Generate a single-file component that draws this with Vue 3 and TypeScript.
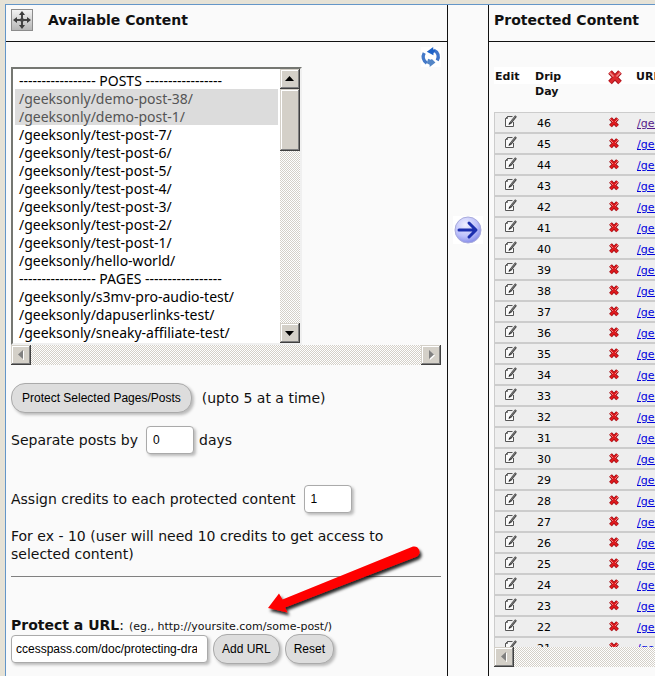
<script setup lang="ts">
import { ref } from 'vue'

interface Entry {
  label: string
  selected?: boolean
}

const dashes = '-----------------'
const entries: Entry[] = [
  { label: `${dashes} POSTS ${dashes}` },
  { label: '/geeksonly/demo-post-38/', selected: true },
  { label: '/geeksonly/demo-post-1/', selected: true },
  { label: '/geeksonly/test-post-7/' },
  { label: '/geeksonly/test-post-6/' },
  { label: '/geeksonly/test-post-5/' },
  { label: '/geeksonly/test-post-4/' },
  { label: '/geeksonly/test-post-3/' },
  { label: '/geeksonly/test-post-2/' },
  { label: '/geeksonly/test-post-1/' },
  { label: '/geeksonly/hello-world/' },
  { label: `${dashes} PAGES ${dashes}` },
  { label: '/geeksonly/s3mv-pro-audio-test/' },
  { label: '/geeksonly/dapuserlinks-test/' },
  { label: '/geeksonly/sneaky-affiliate-test/' },
]

const chosen = ref<string[]>(entries.filter((e) => e.selected).map((e) => e.label))
const days = ref('0')
const credits = ref('1')
const url = ref('ccesspass.com/doc/protecting-drafts/')

const dripDays: number[] = Array.from({ length: 26 }, (_, i) => 46 - i)
</script>

<template>
  <main class="page">
    <section class="col available">
      <header class="bar">
        <svg class="move" viewBox="0 0 22 22" aria-hidden="true">
          <defs>
            <linearGradient id="plate" x1="0" y1="0" x2="0" y2="1">
              <stop offset="0" stop-color="#f4f4f4" />
              <stop offset="1" stop-color="#b4b4b4" />
            </linearGradient>
          </defs>
          <rect x="0.5" y="0.5" width="21" height="21" fill="url(#plate)" stroke="#8c8c8c" />
          <path d="M11 4v14M4 11h14" stroke="#444" stroke-width="2" />
          <path d="M11 2l3 4H8zM11 20l3-4H8zM2 11l4-3v6zM20 11l-4-3v6z" fill="#3c3c3c" />
          <circle cx="11" cy="11" r="2" fill="#444" />
        </svg>
        <h2>Available Content</h2>
      </header>
      <div class="body">
        <div class="tools">
          <button class="refresh" type="button" aria-label="Refresh">
            <svg viewBox="1 1 18 18">
              <path d="M6.2 15.6C2.8 13.2 2.2 9.6 3.9 6.4" fill="none" stroke="#4479c8" stroke-width="3" />
              <path d="M12.6 4C16.4 5.6 17.6 9.6 15.6 13.2" fill="none" stroke="#3f74c9" stroke-width="3" />
              <path d="M6.2 5.2L12 1V3l2 1.2-1.8 2.4V8.500z" fill="#1d62c8" />
              <path d="M14 15L8.800 19v-2l-2.600-1.400L7.400 11.500l2.400 1 1-.6z" fill="#5385c6" />
            </svg>
          </button>
        </div>

        <div class="listbox">
          <select v-model="chosen" multiple size="15" aria-label="Available Content">
            <option v-for="e in entries" :key="e.label" :value="e.label">{{ e.label }}</option>
          </select>
          <div class="track vertical">
            <button class="knob" type="button" aria-label="Scroll up">
              <svg viewBox="0 0 20 20"><path d="M5 12h9L9.500 7z" fill="#000" /></svg>
            </button>
            <div class="knob thumb"></div>
            <button class="knob end" type="button" aria-label="Scroll down">
              <svg viewBox="0 0 20 20"><path d="M5 8h9l-4.500 5z" fill="#000" /></svg>
            </button>
          </div>
        </div>
        <div class="track">
          <button class="knob" type="button" aria-label="Scroll left">
            <svg viewBox="0 0 20 20"><path d="M12.500 6v9" stroke="#fff" /><path d="M12 5v9L7 9.500z" fill="#808080" /></svg>
          </button>
          <button class="knob end" type="button" aria-label="Scroll right">
            <svg viewBox="0 0 20 20"><path d="M9 6v9l5-4.500z" fill="#fff" /><path d="M8 5v9l5-4.500z" fill="#808080" /></svg>
          </button>
        </div>

        <form class="fields" @submit.prevent>
          <div class="line protect">
            <button class="pill" type="button">Protect Selected Pages/Posts</button>
            <span>(upto 5 at a time)</span>
          </div>
          <div class="line separate">
            <label for="days">Separate posts by</label>
            <input id="days" v-model="days" class="box small" type="text" />
            <span>days</span>
          </div>
          <div class="line assign">
            <label for="credits">Assign credits to each protected content</label>
            <input id="credits" v-model="credits" class="box small" type="text" />
          </div>
          <p>For ex - 10 (user will need 10 credits to get access to selected content)</p>
          <div class="divider">
            <hr />
            <svg class="pointer" viewBox="0 0 170 80" aria-hidden="true">
              <defs>
                <filter id="cast" x="-10%" y="-10%" width="130%" height="140%">
                  <feDropShadow dx="2" dy="3" stdDeviation="1.500" flood-color="#000" flood-opacity="0.85" />
                </filter>
              </defs>
              <path
                d="M6 68L17 53.500 20.500 59.500 151 6.500A5.500 5.500 0 0 1 155 16.500L23 67.500 25.500 72.500Z"
                fill="#f00"
                filter="url(#cast)"
              />
            </svg>
          </div>
          <div class="caption">
            <label for="url"><strong>Protect a URL</strong>:</label>
            <small>(eg., http://yoursite.com/some-post/)</small>
          </div>
          <div class="line submit">
            <input id="url" v-model="url" class="box wide" type="text" />
            <button class="pill" type="button">Add URL</button>
            <button class="pill" type="reset">Reset</button>
          </div>
        </form>
      </div>
    </section>

    <section class="col transfer">
      <button type="button" aria-label="Move to protected">
        <svg viewBox="0 0 30 28">
          <defs>
            <radialGradient id="orb" cx="0.4" cy="0.3" r="0.75">
              <stop offset="0" stop-color="#f0f0ff" />
              <stop offset="0.6" stop-color="#bcc0fa" />
              <stop offset="1" stop-color="#7d84e6" />
            </radialGradient>
          </defs>
          <circle cx="15" cy="14" r="13" fill="url(#orb)" stroke="#a9abdc" />
          <path d="M6 14h16M16 7l7 7-7 7" fill="none" stroke="#1c2fae" stroke-width="3" stroke-linecap="round" stroke-linejoin="round" />
        </svg>
      </button>
    </section>

    <section class="col protected">
      <header class="bar">
        <h2>Protected Content</h2>
      </header>
      <div class="pane">
        <table>
          <colgroup>
            <col class="c-edit" />
            <col class="c-day" />
            <col class="c-del" />
            <col />
          </colgroup>
          <thead>
            <tr>
              <th>Edit</th>
              <th>Drip<br />Day</th>
              <th>
                <svg class="cross big" viewBox="0 0 16 16" role="img" aria-label="Delete">
                  <path d="M3 3l10 10.500M13 3L3 13.500" stroke="#a8121c" stroke-width="5" />
                  <path d="M3 3l10 10.500M13 3L3 13.500" stroke="#dc2a2e" stroke-width="3.200" />
                  <path d="M2.500 3.500l4 4M13.500 3.500l-4 4" stroke="#ee8484" stroke-width="1.500" />
                </svg>
              </th>
              <th>URL</th>
            </tr>
          </thead>
          <tbody>
            <tr v-for="(day, i) in dripDays" :key="day">
              <td class="action">
                <button class="icon" type="button" aria-label="Edit">
                  <svg class="pad" viewBox="0 0 13 13">
                    <path d="M3.500 1.500H8.500M9.500 7v4.500h-8V3.500l2-2" fill="#fafafa" stroke="#555" />
                    <path d="M3.500 1.500v2h-2z" fill="#999" stroke="#555" stroke-width="0.800" />
                    <path d="M12 1L6.500 8" stroke="#444" stroke-width="2.200" />
                    <path d="M11.500 1.300L7 7" stroke="#aaa" stroke-width="0.600" />
                    <path d="M4.600 10l.6-2.800 2.100 1.500z" fill="#222" />
                  </svg>
                </button>
              </td>
              <td class="day">{{ day }}</td>
              <td class="action">
                <button class="icon" type="button" aria-label="Delete">
                  <svg class="cross" viewBox="0 0 12 12">
                    <path d="M2.500 2.500l7 7.500M9.500 2.500l-7 7.500" stroke="#980c14" stroke-width="3.800" />
                    <path d="M2.500 2.500l7 7.500M9.500 2.500l-7 7.500" stroke="#e01a1e" stroke-width="2.200" />
                    <path d="M2 3l3 3M10 3L7 6" stroke="#f08080" />
                  </svg>
                </button>
              </td>
              <td><a href="#" :class="{ seen: i === 0 }">/geeksonly/</a></td>
            </tr>
          </tbody>
        </table>
      </div>
      <div class="track side">
        <button class="knob" type="button" aria-label="Scroll left">
          <svg viewBox="0 0 20 20"><path d="M12.500 6v9" stroke="#fff" /><path d="M12 5v9L7 9.500z" fill="#808080" /></svg>
        </button>
      </div>
    </section>
  </main>
</template>

<style>
body {
  background: #e6e2d6;
  overflow: hidden;
}
</style>

<style scoped>
* {
  box-sizing: border-box;
}
.page {
  display: grid;
  grid-template-columns: minmax(0, 441fr) 42px minmax(0, 166fr);
  min-height: calc(100vh - 4px);
  margin: 4px 0 0 5px;
  border-top: 1px solid #6496c8;
  border-left: 1px solid #6496c8;
  background: #fafafa;
  color: #111;
  font-family: Verdana, 'DejaVu Sans', sans-serif;
  font-size: 14px;
  line-height: 18px;
}
.transfer {
  border-left: 1px solid #111;
  border-right: 1px solid #111;
  padding-top: 211px;
  display: flex;
  justify-content: center;
  align-items: flex-start;
}
.transfer button {
  width: 30px;
  height: 28px;
  background: #fff;
}
.bar {
  display: flex;
  align-items: center;
  gap: 15px;
  height: 37px;
  padding: 0 5px 6px;
  border-bottom: 1px solid #111;
}
h2 {
  margin: 0;
  font-size: 14px;
  line-height: 18px;
  white-space: nowrap;
}
button {
  padding: 0;
  border: 0;
  background: none;
  font: inherit;
  color: inherit;
}
svg {
  display: block;
  width: 100%;
  height: 100%;
}
svg.move {
  width: 22px;
  height: 22px;
}
.body {
  padding: 5px 6px 0 5px;
}
.tools {
  display: flex;
  justify-content: flex-end;
  height: 20px;
}
.refresh {
  width: 20px;
  height: 20px;
  background: #fff;
}
.listbox {
  display: flex;
  width: 291px;
  border: 2px solid #f0f0f0;
  border-top-color: #757772;
  border-left-color: #757772;
  background: #fff;
}
select {
  flex: 1;
  min-width: 0;
  height: 274px;
  margin: 0;
  padding: 2px;
  border: 0;
  border-radius: 0;
  outline: 0;
  background: #fff;
  color: #000;
  font-family: 'Trebuchet MS', 'Noto Sans', sans-serif;
  font-size: 14px;
  overflow: hidden;
  scrollbar-width: none;
}
option {
  height: 18px;
  min-height: 18px;
  padding: 0 4px;
  line-height: 18px;
}
option:checked {
  background: linear-gradient(#dcdcdc, #dcdcdc);
  -webkit-text-fill-color: #555;
}
.track {
  display: flex;
  height: 20px;
  background: repeating-conic-gradient(#d4d0c8 0% 25%, #fff 0% 50%) 0 0 / 2px 2px;
}
.vertical {
  flex-direction: column;
  width: 20px;
  height: auto;
}
.knob {
  width: 20px;
  height: 20px;
  flex: none;
  background: #d4d0c8;
  box-shadow:
    inset -1px -1px #404040,
    inset 1px 1px #d4d0c8,
    inset -2px -2px #808080,
    inset 2px 2px #fff;
}
.thumb {
  height: 62px;
}
.vertical .end {
  margin-top: auto;
}
.track:not(.vertical) .end {
  margin-left: auto;
}
.fields {
  padding-top: 18px;
}
.line {
  display: flex;
  align-items: center;
  gap: 5px;
}
.line label {
  margin-right: 3px;
}
.protect {
  gap: 10px;
  margin-bottom: 13px;
}
.separate {
  margin-bottom: 31px;
}
.assign {
  margin-bottom: 14px;
}
.pill {
  height: 30px;
  padding: 0 8px;
  border: 1px solid #aaa;
  border-radius: 14px;
  background: #ddd;
  box-shadow: 2px 2px 3px #bbb;
  color: #000;
  font-family: Arial, 'Liberation Sans', sans-serif;
  font-size: 12px;
  white-space: nowrap;
}
.protect .pill {
  padding: 0 10px;
}
.box {
  height: 28px;
  padding: 0 5px;
  border: 1px solid #aaa;
  border-radius: 4px;
  outline: 0;
  background: #fff;
  box-shadow: 2px 2px 3px #bbb;
  color: #000;
  font-family: Arial, 'Liberation Sans', sans-serif;
  font-size: 12px;
}
.small {
  width: 48px;
  padding: 0 6px;
}
.wide {
  width: 197px;
  padding: 0 10px 0 4px;
}
p {
  margin: 0 0 13px;
}
.divider {
  position: relative;
  margin-bottom: 41px;
}
hr {
  margin: 0;
  border: 0;
  border-top: 1px solid #808080;
}
.pointer {
  position: absolute;
  top: -36px;
  left: 251px;
  width: 170px;
  height: 80px;
}
.caption {
  display: flex;
  align-items: baseline;
  gap: 5px;
  line-height: 14px;
  white-space: nowrap;
}
small {
  font-size: 11px;
}
.pane {
  height: 580px;
  margin: 25px 0 0 5px;
  overflow: hidden;
}
.side {
  margin-left: 5px;
}
table {
  width: 400px;
  table-layout: fixed;
  border-spacing: 0;
  font-size: 11px;
}
.c-edit {
  width: 40px;
}
.c-day {
  width: 72px;
}
.c-del {
  width: 29px;
}
th {
  height: 45px;
  padding: 2px 0 0 1px;
  background: linear-gradient(#fff, #fff) 0 0 / 100% 17px no-repeat;
  text-align: left;
  vertical-align: top;
  line-height: 15px;
}
td {
  height: 21px;
  padding: 2px 0 0 2px;
  border-top: 1px solid #ccc;
  border-bottom: 1px solid #ccc;
  background: #eee;
  line-height: 17px;
}
td.action {
  padding-top: 0;
  padding-bottom: 2px;
}
td:first-child {
  border-left: 1px solid #ccc;
  padding-left: 9px;
}
td.day {
  padding-left: 3px;
  color: #000;
}
.icon {
  display: block;
}
svg.pad {
  width: 13px;
  height: 13px;
}
svg.cross {
  width: 12px;
  height: 12px;
}
svg.big {
  width: 16px;
  height: 16px;
}
a {
  color: #00d;
}
a.seen {
  color: #551a8b;
}
</style>
